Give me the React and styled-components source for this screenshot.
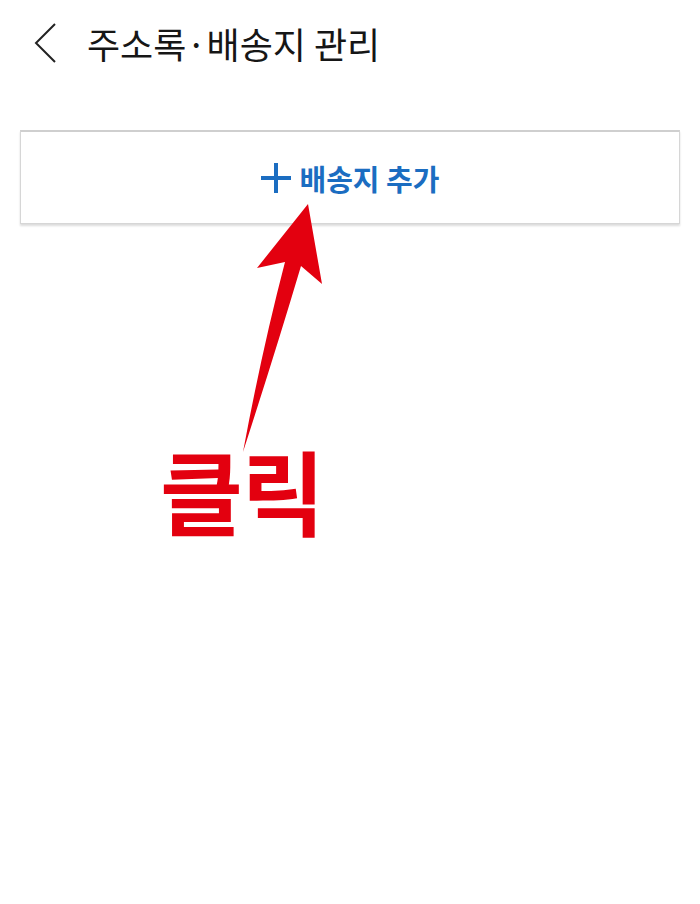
import React from "react";
import styled, { createGlobalStyle } from "styled-components";

const GlobalStyle = createGlobalStyle`
  html, body {
    margin: 0;
    padding: 0;
    background: #ffffff;
  }
  body {
    font-family: "Noto Sans CJK KR", "Noto Sans", sans-serif;
  }
`;

const Page = styled.div`
  position: relative;
  width: 700px;
  height: 904px;
  background: #fff;
  overflow: hidden;
`;

const Header = styled.div`
  display: flex;
  align-items: center;
  height: 86px;
  padding-left: 31px;
  gap: 28px;
`;

const BackButton = styled.button`
  display: flex;
  align-items: center;
  justify-content: center;
  width: 28px;
  height: 44px;
  padding: 0;
  border: none;
  background: none;
  cursor: pointer;
`;

const Title = styled.h1`
  margin: 0;
  font-size: 36px;
  font-weight: 400;
  color: #161616;
  letter-spacing: 0;
`;

const Content = styled.div`
  padding: 44px 20px 0;
`;

const AddButton = styled.button`
  display: flex;
  align-items: center;
  justify-content: center;
  gap: 9px;
  width: 100%;
  height: 94px;
  background: #fff;
  border: 1px solid #d6d6d6;
  border-top: 2px solid #cfcfcf;
  box-shadow: 0 2px 2px rgba(0, 0, 0, 0.14);
  font-family: "Noto Sans CJK KR", sans-serif;
  font-size: 29px;
  font-weight: 700;
  color: #1b6dc1;
  cursor: pointer;
`;

const Arrow = styled.svg`
  position: absolute;
  left: 0;
  top: 0;
  pointer-events: none;
`;

const Callout = styled.div`
  position: absolute;
  left: 160px;
  top: 443px;
  font-family: "Noto Sans CJK KR", sans-serif;
  font-size: 90px;
  font-weight: 700;
  line-height: 1;
  color: #e3000f;
  transform: scaleY(1.02);
  transform-origin: top left;
  letter-spacing: -1px;
`;

export default function App() {
  return (
    <Page>
      <GlobalStyle />
      <Header>
        <BackButton aria-label="뒤로">
          <svg width="24" height="42" viewBox="0 0 24 42">
            <polyline
              points="22,2 3,21 22,40"
              fill="none"
              stroke="#222"
              strokeWidth="2"
            />
          </svg>
        </BackButton>
        <Title>주소록·배송지 관리</Title>
      </Header>
      <Content>
        <AddButton>
          <svg width="30" height="30" viewBox="0 0 30 30">
            <rect x="13" y="0" width="4" height="30" fill="#1b6dc1" />
            <rect x="0" y="13" width="30" height="4" fill="#1b6dc1" />
          </svg>
          배송지 추가
        </AddButton>
      </Content>
      <Arrow width="700" height="904" viewBox="0 0 700 904">
        <path
          d="M308 204 L322 284 L301 266 Q276 350 243 452 Q262 350 285 262 L257 268 Z"
          fill="#e3000f"
        />
      </Arrow>
      <Callout>클릭</Callout>
    </Page>
  );
}
